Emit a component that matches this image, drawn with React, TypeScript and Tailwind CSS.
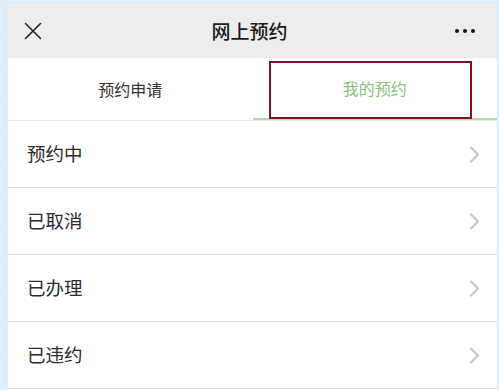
const rows = ['预约中', '已取消', '已办理', '已违约'];

function CloseIcon() {
  return (
    <svg width="18" height="18" viewBox="0 0 18 18" fill="none" stroke="#222" strokeWidth="1.6" strokeLinecap="round">
      <path d="M1.5 1.5L16.5 16.5M16.5 1.5L1.5 16.5" />
    </svg>
  );
}

function Chevron() {
  return (
    <svg width="11" height="17" viewBox="0 0 11 17" fill="none" stroke="#c8c8c8" strokeWidth="2.2" strokeLinecap="round" strokeLinejoin="round">
      <path d="M2 1.5L9 8.5L2 15.5" />
    </svg>
  );
}

export default function App() {
  return (
    <div
      className="w-[499px] h-[390px] overflow-hidden bg-[#dcedfb] bg-[linear-gradient(#e4f1fc_1px,transparent_1px),linear-gradient(90deg,#e4f1fc_1px,transparent_1px)] bg-[size:32px_32px] pl-2 pt-1 pr-[2px]"
      style={{ fontFamily: '"Noto Sans CJK SC", "Noto Sans", sans-serif' }}
    >
      <div className="flex h-full flex-col bg-white">
        {/* top bar */}
        <div className="flex h-[54px] shrink-0 items-center bg-[#ededed] pl-4 pr-[22px]">
          <div className="flex flex-1 items-center">
            <CloseIcon />
          </div>
          <div className="text-[19px] font-medium text-[#1a1a1a]">网上预约</div>
          <div className="flex flex-1 items-center justify-end gap-[4px]">
            <span className="h-[4px] w-[4px] rounded-full bg-[#111]" />
            <span className="h-[4px] w-[4px] rounded-full bg-[#111]" />
            <span className="h-[4px] w-[4px] rounded-full bg-[#111]" />
          </div>
        </div>

        {/* tabs */}
        <div className="grid h-[63px] shrink-0 grid-cols-2 border-b border-[#ececec]">
          <div className="flex items-center justify-center text-[16px] text-[#333]">预约申请</div>
          <div className="relative flex items-center justify-center border-b-2 border-[#b5d9ac] text-[16px] text-[#8cbf80]">
            我的预约
            <div className="absolute left-4 right-[25px] top-[3px] bottom-[-1px] border-2 border-[#7a1322]" />
          </div>
        </div>

        {/* list */}
        <div className="flex flex-col">
          {rows.map((label) => (
            <div key={label} className="flex h-[67px] items-center justify-between border-b border-[#e2e2e2] pl-[19px] pr-[17px]">
              <span className="text-[18.5px] text-[#2b2b2b]">{label}</span>
              <Chevron />
            </div>
          ))}
        </div>
      </div>
    </div>
  );
}
